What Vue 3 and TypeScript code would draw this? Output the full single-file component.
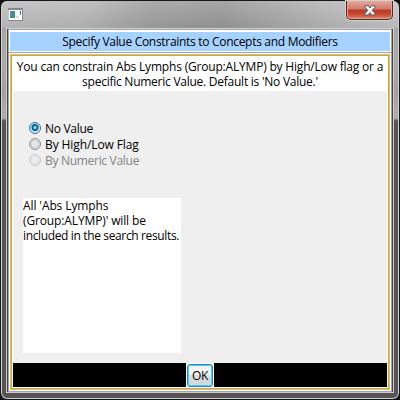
<script setup lang="ts">
import { ref } from 'vue'

interface Option { id: string; label: string; disabled?: boolean }

const title = 'Specify Value Constraints to Concepts and Modifiers'
const intro: string[] = [
  'You can constrain Abs Lymphs (Group:ALYMP) by High/Low flag or a',
  "specific Numeric Value. Default is 'No Value.'",
]
const options: Option[] = [
  { id: 'none', label: 'No Value' },
  { id: 'flag', label: 'By High/Low Flag' },
  { id: 'numeric', label: 'By Numeric Value', disabled: true },
]
const summary: string[] = ["All 'Abs Lymphs", "(Group:ALYMP)' will be", 'included in the search results.']
const selected = ref('none')
</script>

<template>
  <div class="window">
    <header class="titlebar">
      <svg class="app-icon" width="15" height="13" viewBox="0 0 15 13">
        <rect width="15" height="13" fill="#858a90" />
        <rect x="0.5" y="2" width="13.5" height="10" fill="#fff" />
        <rect x="2" y="3" width="5" height="7" fill="#3d8f86" />
        <rect x="2" y="3" width="2" height="5" fill="#5488ad" />
        <rect x="8" y="8" width="3" height="2" fill="#d5dbd5" />
        <rect x="12" y="3" width="1" height="2" fill="#2a58b0" />
        <rect x="12" y="5" width="1" height="2" fill="#4aa45c" />
      </svg>
      <button class="close" aria-label="Close">
        <svg width="12" height="11" viewBox="0 0 12 11">
          <path d="M1 .8H4.2L6 3L7.8 .8H11V2.2L8.2 5.3L11 8.6V10H7.8L6 7.6L4.2 10H1V8.6L3.8 5.3L1 2.2Z" fill="#fff" stroke="#55586a" stroke-width="1" />
        </svg>
      </button>
    </header>
    <main class="client">
      <h1 class="heading"><span>{{ title }}</span></h1>
      <section class="panel">
        <div class="body">
          <div class="intro">
            <p v-for="line in intro" :key="line">{{ line }}</p>
          </div>
          <div class="options">
            <label v-for="o in options" :key="o.id" class="option" :class="{ disabled: o.disabled }" @click="!o.disabled && (selected = o.id)">
              <span class="radio" :class="{ checked: selected === o.id }"></span>
              <span class="option-text">{{ o.label }}</span>
            </label>
          </div>
          <div class="summary">
            <p v-for="line in summary" :key="line">{{ line }}</p>
          </div>
          <footer class="actions">
            <div class="ok-wrap"><button class="ok">OK</button></div>
          </footer>
        </div>
      </section>
    </main>
  </div>
</template>

<style>
body { background: #111; overflow: hidden; }
</style>

<style scoped>
* { box-sizing: border-box; margin: 0; }
.window {
  width: 400px;
  height: 400px;
  padding: 0 5px 6px;
  border: 1px solid #19171b;
  border-radius: 7px;
  box-shadow: inset 0 0 0 1px #cfcfcf;
  background: linear-gradient(180deg, #b4b4b4 0, #a5a5a5 25px, #aaa 60px, #a5a09f 90px, #b0adac 117px, #565454 120px, #565454 100%);
  font-family: "Open Sans", "Noto Sans", sans-serif;
  font-size: 12px;
  line-height: 15px;
  letter-spacing: -0.3px;
  color: #000;
  white-space: nowrap;
}
.titlebar {
  display: flex;
  justify-content: space-between;
  height: 27px;
  margin: 0 -4px;
  padding: 0 5px 0 6px;
  border-radius: 6px 6px 0 0;
  background:
    linear-gradient(180deg, rgba(255, 255, 255, .12), rgba(0, 0, 0, .06)),
    linear-gradient(90deg, #bebebe 0, #b9b9b9 80px, #a0a0a0 150px, #999 220px, #b5b5b5 320px, #c5c5c5 100%);
}
.app-icon { margin-top: 7px; }
.close {
  display: flex;
  justify-content: center;
  width: 47px;
  height: 19px;
  padding: 4px 0 0;
  border: 1px solid #4c2a2a;
  border-top: 0;
  border-radius: 0 0 5px 5px;
  box-shadow: inset 0 0 0 1px #e5a496, 0 0 0 1px #d2d2d2;
  background: linear-gradient(180deg, #e5aa9c 0, #d07a6a 8px, #b93a26 9px, #c64830 13px, #dd8570 100%);
}
.client {
  display: flex;
  flex-direction: column;
  height: 365px;
  width: 388px;
  padding: 1px 2px;
  border: 1px solid #cfcfcf;
  box-shadow: inset 0 0 0 1px #45453f;
  background: #fff;
}
.heading {
  display: flex;
  justify-content: center;
  height: 22px;
  font-size: 12px;
  font-weight: 400;
  line-height: 20px;
  border: 1px solid #fff;
  border-top-width: 2px;
  box-shadow: 0 0 0 1px #a0a4aa;
  background: #a6d2ff;
}
.panel {
  flex: 1;
  margin-top: 1px;
  border: 1px solid #fff;
  box-shadow: 0 0 0 1px #a0a4aa;
}
.body {
  display: flex;
  flex-direction: column;
  height: 100%;
  padding: 2px;
  border: 1px solid #ffc30f;
  box-shadow: inset 0 0 0 1px #a3a6ad, inset 0 0 0 2px #fff;
  background: #efefef;
}
.intro { height: 34px; padding-top: 2px; text-align: center; background: #fff; }
.intro p:first-child { letter-spacing: -0.19px; }
.intro p:last-child { letter-spacing: -0.25px; }
.options { padding: 29px 0 0 16px; }
.option { display: flex; align-items: center; gap: 4px; height: 16px; }
.option:nth-child(2) { letter-spacing: -0.1px; }
.radio {
  width: 12px;
  height: 12px;
  border: 1px solid #8d8f91;
  border-radius: 50%;
  background: radial-gradient(circle, #e8e8e8 0 3px, #bfc2c6 4px, #f4f4f4 5px);
}
.radio.checked {
  border-color: #3c718f;
  background: radial-gradient(circle at 50% 45%, #7bdcf5 0 1px, #157bb0 2px, #0c4770 3px, #b6e4f8 4px, #d8effa 5px);
}
.disabled { color: #838383; }
.disabled .radio { opacity: .4; }
.summary { width: 158px; height: 155px; margin: 30px 0 0 10px; background: #fff; }
.summary p:nth-child(1) { letter-spacing: -0.1px; }
.summary p:nth-child(2) { letter-spacing: -0.13px; }
.summary p:nth-child(3) { letter-spacing: -0.36px; }
.actions { display: flex; justify-content: center; height: 24px; margin-top: auto; background: #000; }
.ok-wrap { width: 28px; padding: 1px; background: #fff; }
.ok {
  display: block;
  width: 26px;
  height: 23px;
  padding: 0;
  border: 1px solid #3c7fb1;
  border-radius: 3px;
  box-shadow: inset 0 0 0 1px #43d0f5;
  background: linear-gradient(#f3f3f3 0 45%, #dcdfe1 50%, #cfd5d9);
  font: inherit;
  letter-spacing: inherit;
  color: #000;
}
</style>
